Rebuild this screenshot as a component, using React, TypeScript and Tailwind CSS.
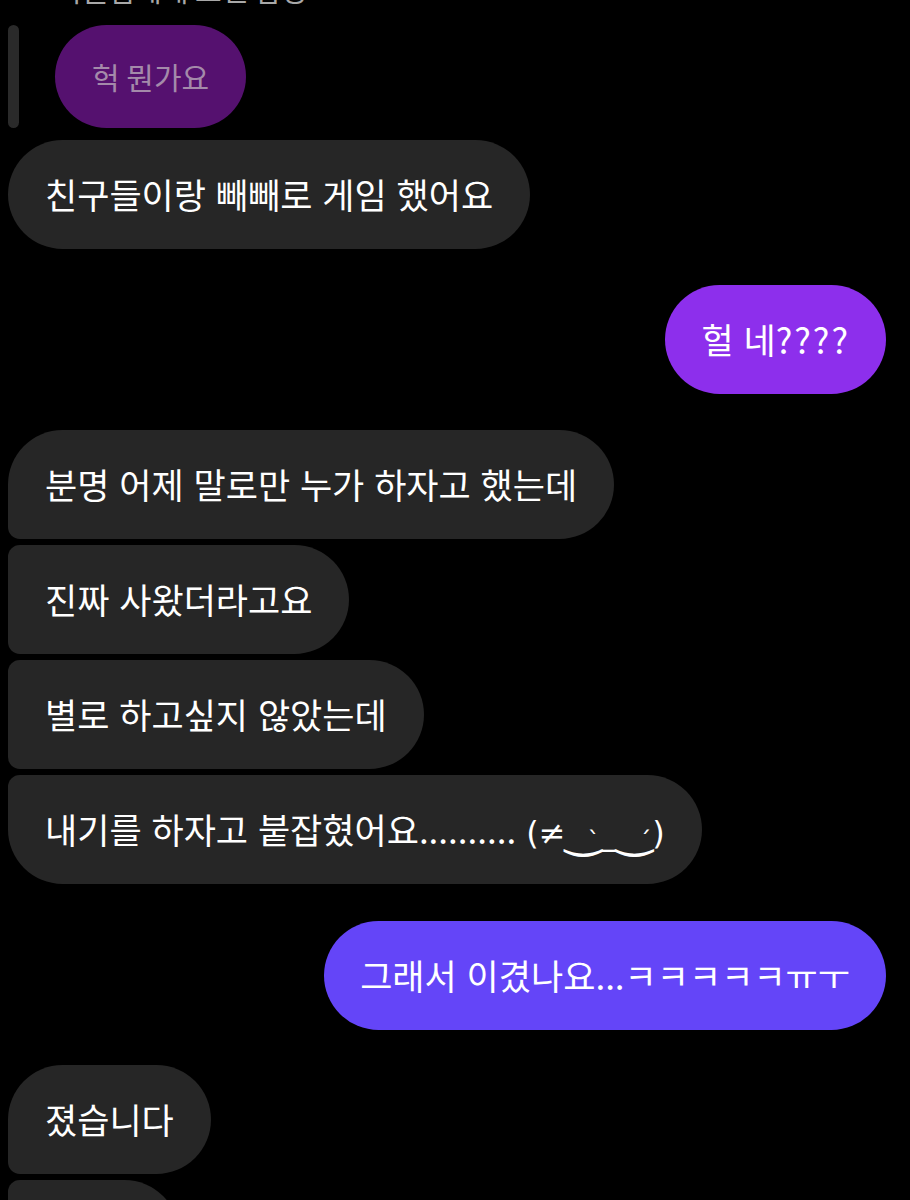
import React from "react";

function Left({ text, r }: { text: React.ReactNode; r: string }) {
  return (
    <div className="flex justify-start pl-[8px]">
      <div className={`h-[109px] flex items-center px-[37px] bg-[#262626] text-white text-[35px] [word-spacing:2px] whitespace-nowrap ${r}`}>
        {text}
      </div>
    </div>
  );
}

function Right({ text, bg }: { text: React.ReactNode; bg: string }) {
  return (
    <div className="flex justify-end pr-[24px]">
      <div className={`h-[109px] flex items-center px-[36px] rounded-[55px] text-white text-[35px] [word-spacing:2px] whitespace-nowrap ${bg}`}>
        {text}
      </div>
    </div>
  );
}

function Eye({ accent }: { accent: string }) {
  return (
    <span className="relative inline-block text-[44px] leading-none -translate-y-[2px]">
      ‿
      <span className="absolute right-[1px] top-[20px] text-[24px] leading-none">{accent}</span>
    </span>
  );
}

export default function App() {
  return (
    <div className="w-[910px] h-[1200px] bg-black overflow-hidden font-['Noto_Sans_CJK_KR','Noto_Sans',sans-serif]">
      <div className="h-[25px] overflow-hidden relative">
        <div className="absolute left-[55px] bottom-[19px] text-[29px] leading-[34px] text-[#a8a8a8] whitespace-nowrap">
          회원님에게 보낸 답장
        </div>
      </div>
      <div className="flex gap-[36px] pl-[8px] h-[103px]">
        <div className="w-[11px] h-full rounded-full bg-[#2a2a2a]" />
        <div className="h-full flex items-center px-[37px] rounded-[52px] bg-[#55116f] text-[#a48aaa] text-[30px] whitespace-nowrap">
          헉 뭔가요
        </div>
      </div>
      <div className="mt-[12px]">
        <Left text="친구들이랑 빼빼로 게임 했어요" r="rounded-[55px]" />
      </div>
      <div className="mt-[36px]">
        <Right
          text={
            <span>
              헐 네<span className="tracking-[2px]">????</span>
            </span>
          }
          bg="bg-[#8d2fec]"
        />
      </div>
      <div className="mt-[36px] flex flex-col gap-[6px]">
        <Left text="분명 어제 말로만 누가 하자고 했는데" r="rounded-r-[55px] rounded-tl-[55px] rounded-bl-[12px]" />
        <Left text="진짜 사왔더라고요" r="rounded-r-[55px] rounded-l-[12px]" />
        <Left text="별로 하고싶지 않았는데" r="rounded-r-[55px] rounded-l-[12px]" />
        <Left
          text={
            <span className="flex items-center">
              <span>내기를 하자고 붙잡혔어요..........</span>
              <span className="ml-[10px] font-['DejaVu_Sans',sans-serif] text-[32px] leading-[40px] flex items-center translate-y-[3px]">
                <span>(≠</span>
                <Eye accent="`" />
                <span>_</span>
                <Eye accent="´" />
                <span>)</span>
              </span>
            </span>
          }
          r="rounded-r-[55px] rounded-bl-[55px] rounded-tl-[12px]"
        />
      </div>
      <div className="mt-[37px]">
        <Right text="그래서 이겼나요...ㅋㅋㅋㅋㅋㅠㅜ" bg="bg-[#6445f8]" />
      </div>
      <div className="mt-[35px] flex flex-col gap-[6px]">
        <Left text="졌습니다" r="rounded-r-[55px] rounded-tl-[55px] rounded-bl-[12px]" />
        <Left text="ㅋㅋㅋ" r="rounded-r-[55px] rounded-l-[12px]" />
      </div>
    </div>
  );
}
